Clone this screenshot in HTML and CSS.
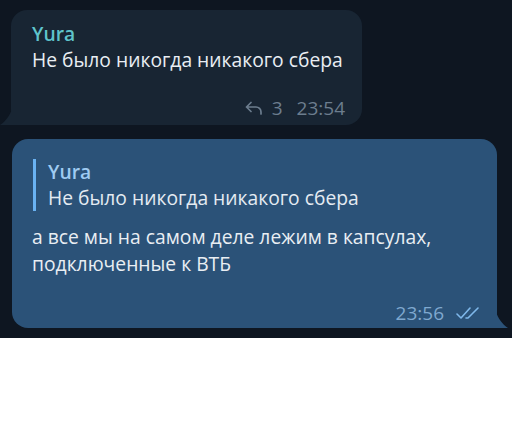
FILE: index.html
```html
<!DOCTYPE html>
<html lang="ru">
<head>
  <meta charset="UTF-8">
  <title>Чат</title>
  <link rel="stylesheet" href="styles.css">
</head>
<body>
  <div class="chat">
    <div class="msg msg-in">
      <div class="author">Yura</div>
      <div class="text">Не было никогда никакого сбера</div>
      <div class="meta">
        <svg class="reply-icon" width="18" height="14" viewBox="0 0 18 14">
          <path d="M6 1.5 L1.5 6 L6 10.5 M1.5 6 H11 A5 5 0 0 1 16 11 V13" fill="none" stroke="currentColor" stroke-width="1.7" stroke-linecap="round" stroke-linejoin="round"/>
        </svg>
        <span class="replies">3</span>
        <span class="time">23:54</span>
      </div>
      <svg class="tail tail-left" width="12" height="16" viewBox="0 0 12 16">
        <path d="M12 0 V16 H0 C6 12 10 6 12 0 Z" fill="#182533"/>
      </svg>
    </div>

    <div class="msg msg-out">
      <div class="quote">
        <div class="quote-author">Yura</div>
        <div class="quote-text">Не было никогда никакого сбера</div>
      </div>
      <div class="text">а все мы на самом деле лежим в капсулах,<br>подключенные к ВТБ</div>
      <div class="meta">
        <span class="time">23:56</span>
        <svg class="checks" width="26" height="14" viewBox="0 0 26 14">
          <path d="M1 8 L5 12 L14 2 M10 12 L12 12 M12 12 L22 2" fill="none" stroke="currentColor" stroke-width="1.6" stroke-linecap="round" stroke-linejoin="round"/>
        </svg>
      </div>
      <svg class="tail tail-right" width="12" height="16" viewBox="0 0 12 16">
        <path d="M0 0 V16 H12 C6 12 2 6 0 0 Z" fill="#2b5278"/>
      </svg>
    </div>
  </div>
</body>
</html>
```

FILE: styles.css
```css
body {
  margin: 0;
  background: #ffffff;
  font-family: 'Open Sans', 'Noto Sans', sans-serif;
}
.chat {
  height: 338px;
  background: #0e1621;
  padding-top: 10px;
  box-sizing: border-box;
  display: flex;
  flex-direction: column;
  gap: 14px;
}
.msg {
  position: relative;
  box-sizing: border-box;
  border-radius: 16px;
  padding: 11px 10px 8px 21px;
  color: #e9eef3;
  font-size: 19.3px;
  line-height: 26px;
  white-space: nowrap;
}
.msg-in {
  margin-left: 11px;
  width: 351px;
  height: 115px;
  background: #182533;
  border-bottom-left-radius: 0;
}
.msg-out {
  margin-left: 12px;
  width: 485px;
  height: 189px;
  background: #2b5278;
  border-bottom-right-radius: 0;
  padding-top: 20px;
  padding-left: 20px;
  padding-right: 20px;
}
.author {
  color: #5fc4cc;
  font-weight: 600;
}
.meta {
  display: flex;
  justify-content: flex-end;
  align-items: center;
  gap: 9px;
  font-size: 19px;
  color: #6c7d8e;
  margin-top: 22px;
}
.msg-in .meta {
  margin-right: 7px;
}
.reply-icon {
  color: #6c7d8e;
}
.replies {
  margin-right: 5px;
}
.quote {
  border-left: 3px solid #6ab2f2;
  padding-left: 12px;
  margin-left: 1px;
  margin-bottom: 12px;
}
.quote-author {
  color: #9fcbf2;
  font-weight: 600;
}
.quote-text {
  color: #e4ebf2;
}
.msg-out .text {
  line-height: 27px;
}
.msg-out .meta {
  color: #7fa8cf;
  margin-top: 23px;
  gap: 12px;
  margin-right: -5px;
}
.checks {
  color: #7fb8ea;
}
.tail {
  position: absolute;
  bottom: 0;
}
.tail-left {
  left: -11px;
}
.tail-right {
  right: -11px;
}
```
